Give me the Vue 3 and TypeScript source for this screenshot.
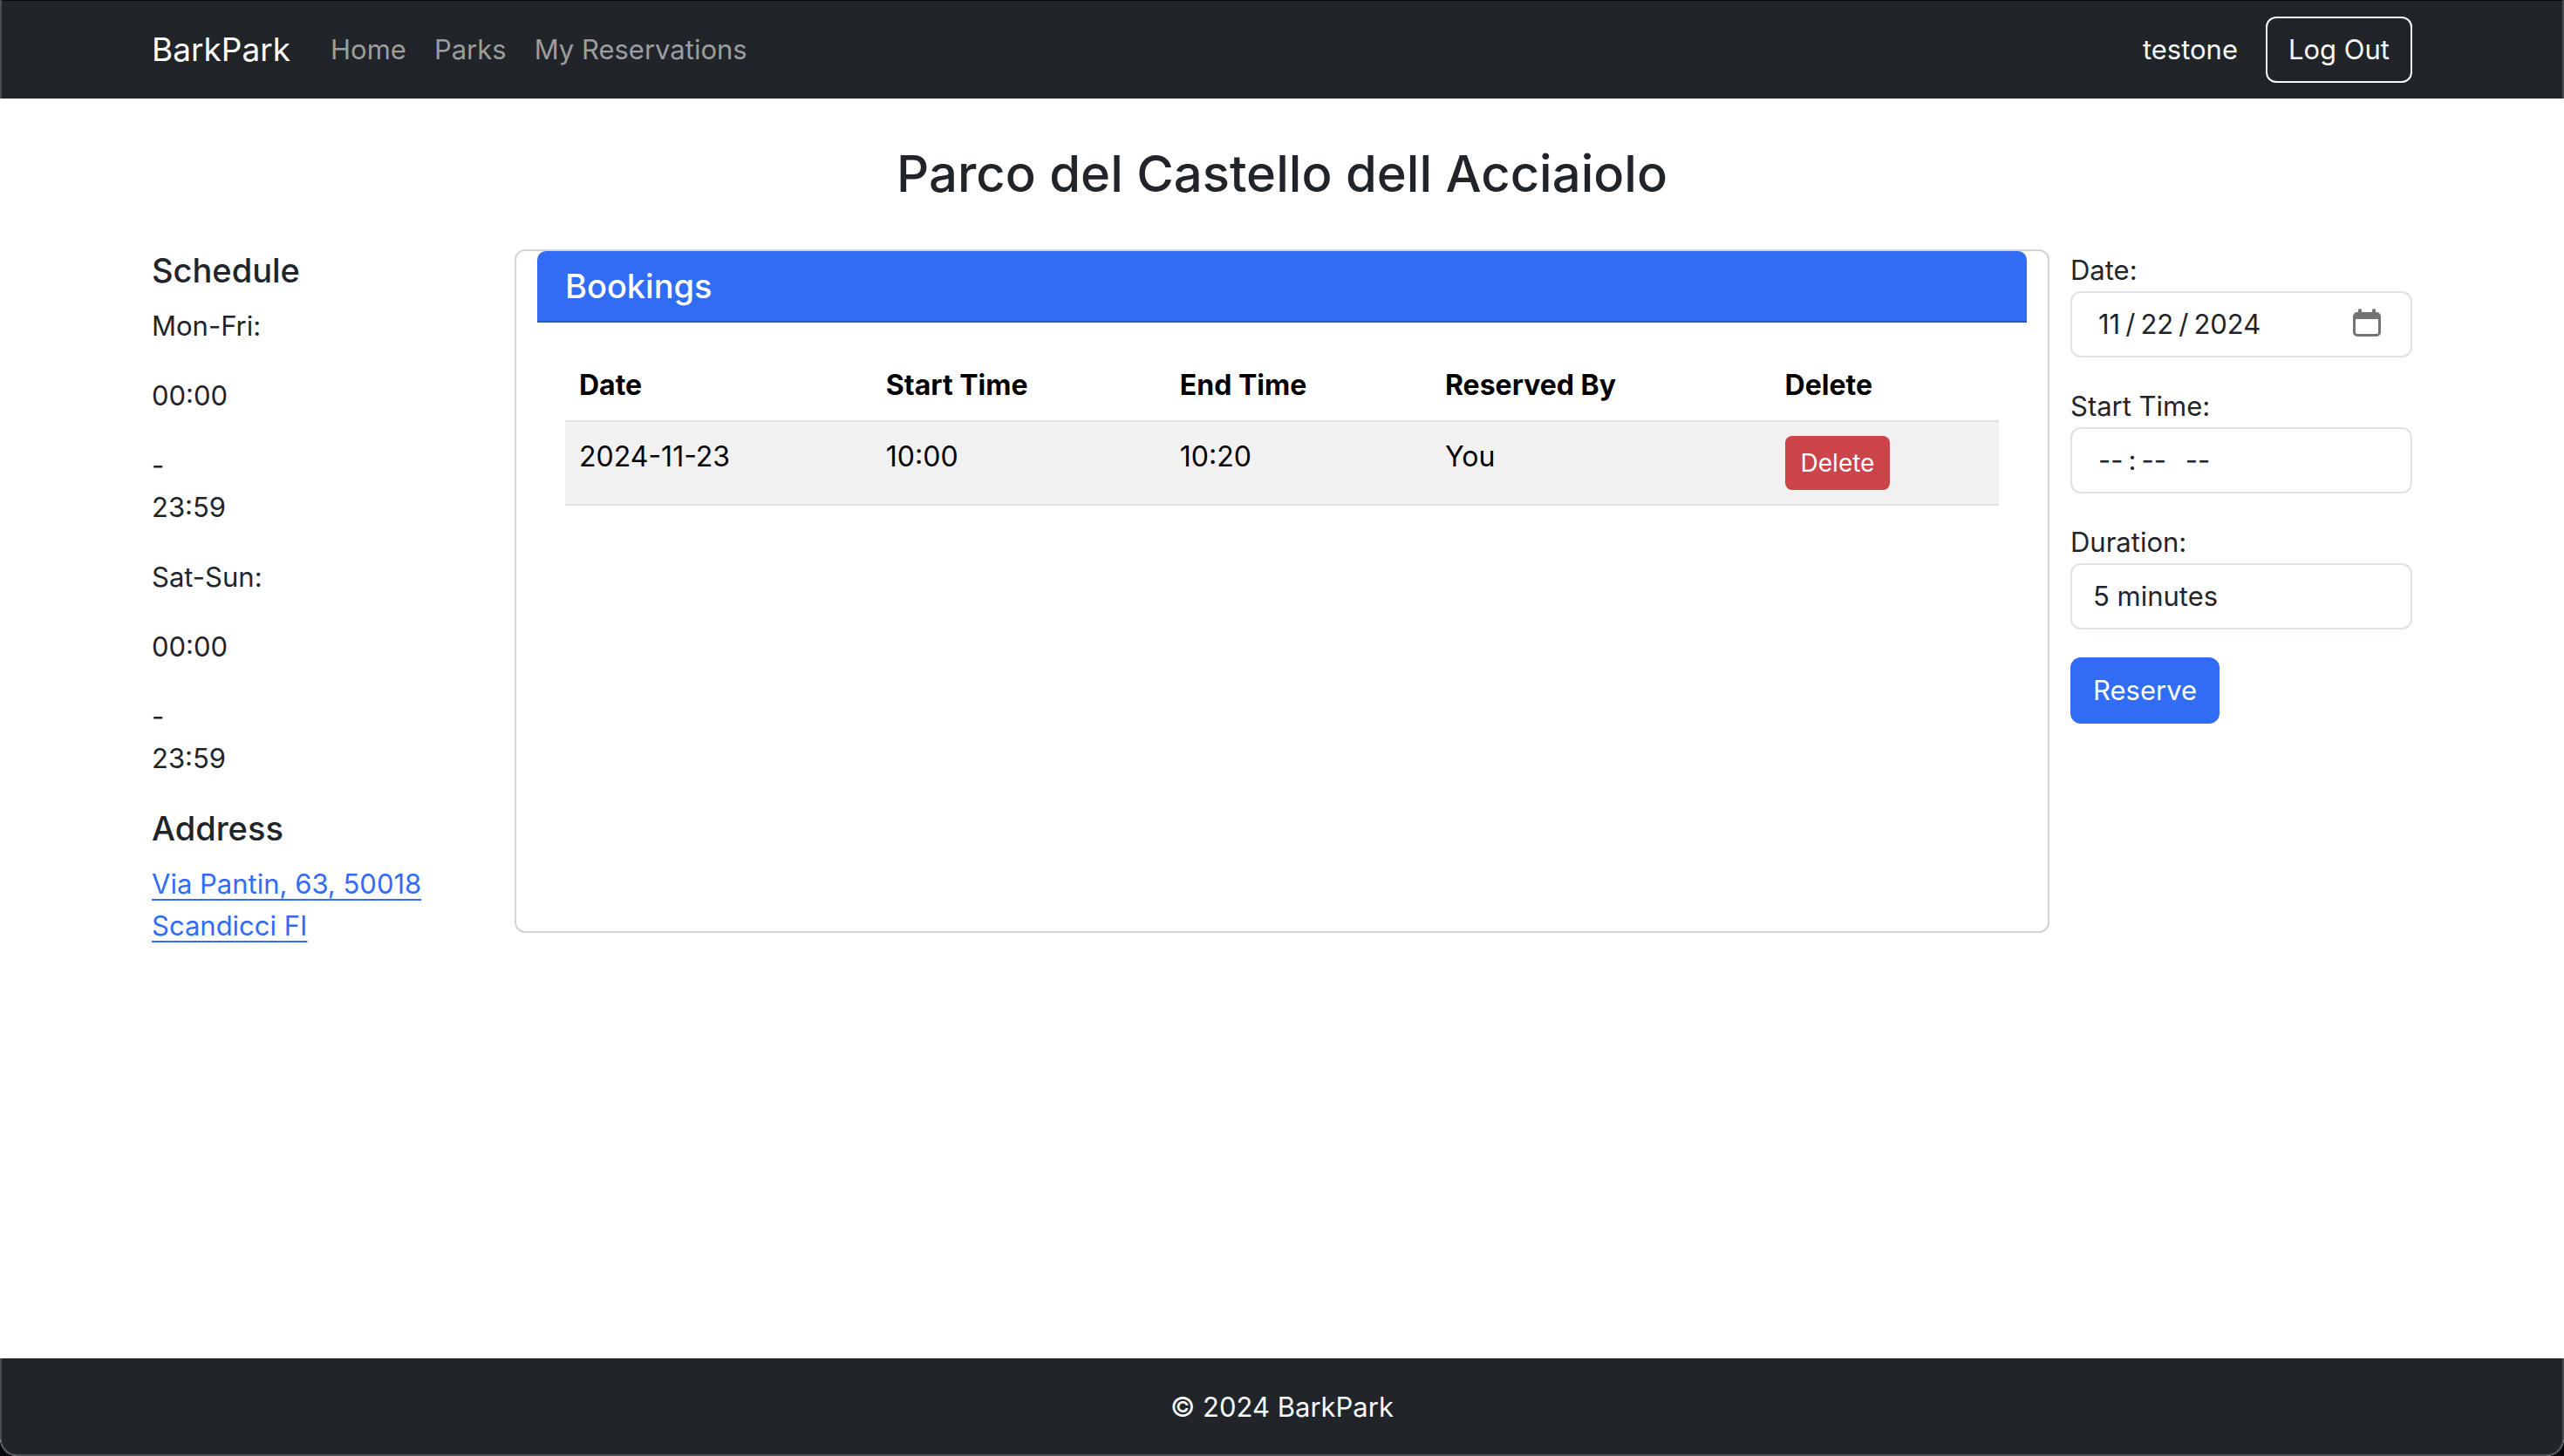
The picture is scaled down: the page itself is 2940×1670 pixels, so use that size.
<script setup lang="ts">
import { ref } from 'vue'

interface Booking {
  id: number
  date: string
  start: string
  end: string
  reservedBy: string
}

const navLinks = ['Home', 'Parks', 'My Reservations']
const schedule = [
  { days: 'Mon-Fri:', open: '00:00', close: '23:59' },
  { days: 'Sat-Sun:', open: '00:00', close: '23:59' },
]
const durations = [5, 10, 15, 20, 30, 60]

const bookings = ref<Booking[]>([
  { id: 1, date: '2024-11-23', start: '10:00', end: '10:20', reservedBy: 'You' },
])
const date = ref('2024-11-22')
const startTime = ref('')
const duration = ref(5)

function removeBooking(id: number) {
  bookings.value = bookings.value.filter((b) => b.id !== id)
}
</script>

<template>
  <div class="page">
    <header class="navbar">
      <div class="container nav-inner">
        <a class="brand" href="#">BarkPark</a>
        <nav class="nav-links">
          <a v-for="link in navLinks" :key="link" class="nav-link" href="#">{{ link }}</a>
        </nav>
        <span class="user">testone</span>
        <button class="btn btn-outline" type="button">Log Out</button>
      </div>
    </header>

    <main class="container main">
      <h1 class="title">Parco del Castello dell Acciaiolo</h1>
      <div class="row">
        <aside class="side">
          <h2 class="heading">Schedule</h2>
          <template v-for="slot in schedule" :key="slot.days">
            <p>{{ slot.days }}</p>
            <p>{{ slot.open }}</p>
            <p>-<br />{{ slot.close }}</p>
          </template>
          <h2 class="heading">Address</h2>
          <a class="address" href="#">Via Pantin, 63, 50018 Scandicci FI</a>
        </aside>

        <section class="card">
          <h2 class="card-header">Bookings</h2>
          <div class="card-body">
            <table>
              <colgroup>
                <col class="c-date" />
                <col class="c-start" />
                <col class="c-end" />
                <col class="c-by" />
                <col />
              </colgroup>
              <thead>
                <tr>
                  <th scope="col">Date</th>
                  <th scope="col">Start Time</th>
                  <th scope="col">End Time</th>
                  <th scope="col">Reserved By</th>
                  <th scope="col">Delete</th>
                </tr>
              </thead>
              <tbody>
                <tr v-for="b in bookings" :key="b.id">
                  <td>{{ b.date }}</td>
                  <td>{{ b.start }}</td>
                  <td>{{ b.end }}</td>
                  <td>{{ b.reservedBy }}</td>
                  <td>
                    <button class="btn-delete" type="button" @click="removeBooking(b.id)">Delete</button>
                  </td>
                </tr>
              </tbody>
            </table>
          </div>
        </section>

        <form class="side" @submit.prevent>
          <div class="field">
            <label for="date">Date:</label>
            <div class="date-wrap">
              <input id="date" v-model="date" class="control" type="date" />
              <svg class="calendar" viewBox="0 0 32 32" aria-hidden="true">
                <path
                  fill="#737376"
                  fill-rule="evenodd"
                  d="M6 2a2 2 0 0 1 4 0V4h12V2a2 2 0 0 1 4 0V4h1a5 5 0 0 1 5 5v18a5 5 0 0 1-5 5H5a5 5 0 0 1-5-5V9a5 5 0 0 1 5-5h1zM3 12v15a2 2 0 0 0 2 2h22a2 2 0 0 0 2-2V12z"
                />
              </svg>
            </div>
          </div>
          <div class="field">
            <label for="start">Start Time:</label>
            <input id="start" v-model="startTime" class="control" type="time" />
          </div>
          <div class="field">
            <label for="duration">Duration:</label>
            <select id="duration" v-model="duration" class="control">
              <option v-for="d in durations" :key="d" :value="d">{{ d }} minutes</option>
            </select>
          </div>
          <button class="btn btn-primary" type="submit">Reserve</button>
        </form>
      </div>
    </main>

    <footer class="footer">© 2024 BarkPark</footer>
  </div>
</template>

<style>
body {
  background: #05070d;
}
</style>

<style scoped>
.page,
.page * {
  box-sizing: border-box;
}
.page {
  display: flex;
  flex-direction: column;
  min-height: 100vh;
  overflow: hidden;
  border-radius: 0 0 20px 20px;
  background: #fff;
  color: #212529;
  font-family: Inter, 'Liberation Sans', sans-serif;
  font-size: 31px;
  line-height: 48px;
}
h1,
h2,
p {
  margin: 0;
}
.container {
  width: 100%;
  max-width: 2640px;
  margin: 0 auto;
  padding: 0 24px;
}
.navbar {
  padding-top: 1px;
  border: 2px solid #4b4e51;
  border-width: 0 2px;
  background: #212529;
  box-shadow: inset 0 1px #0b0c0e;
}
.nav-inner {
  display: flex;
  align-items: center;
  height: 112px;
}
.brand {
  margin-right: 32px;
  color: #fff;
  font-size: 37px;
  text-decoration: none;
}
.nav-links {
  display: flex;
  flex: 1;
}
.nav-link {
  padding: 16px;
  color: #9b9d9e;
  text-decoration: none;
}
.nav-link:first-child {
  padding-left: 14px;
}
.user {
  margin-right: 32px;
  color: #f8f9fa;
}
.btn {
  height: 76px;
  padding: 0 24px;
  border: 2px solid;
  border-radius: 12px;
  font: inherit;
}
.btn-outline {
  border-color: #f8f9fa;
  background: transparent;
  color: #f8f9fa;
}
.btn-primary {
  border-color: #316cf4;
  background: #316cf4;
  color: #fff;
}
.main {
  flex: 1;
}
.title {
  margin: 48px 0;
  font-size: 58px;
  font-weight: 500;
  line-height: 77px;
  text-align: center;
}
.row {
  display: grid;
  grid-template-columns: 2fr 8fr 2fr;
  align-items: start;
  margin: 0 -24px;
}
.side {
  min-width: 0;
  padding: 0 24px;
}
.side p {
  margin-bottom: 32px;
}
.heading {
  margin-bottom: 16px;
  font-size: 38px;
  font-weight: 500;
}
.address {
  color: #316cf4;
  text-underline-offset: 6px;
  text-decoration-thickness: 2px;
}
.card {
  min-height: 784px;
  padding: 0 24px;
  border: 2px solid #d2d3d3;
  border-radius: 12px;
}
.card-header {
  padding: 16px 32px;
  border-bottom: 2px solid #2b59c4;
  border-radius: 10px 10px 0 0;
  background: #316cf4;
  color: #fff;
  font-size: 38px;
  font-weight: 500;
}
.card-body {
  padding: 32px;
}
table {
  width: 100%;
  table-layout: fixed;
  border-collapse: separate;
  border-spacing: 0;
  color: #000;
  font-size: 32px;
}
.c-date {
  width: 21.4%;
}
.c-start {
  width: 20.5%;
}
.c-end {
  width: 18.5%;
}
.c-by {
  width: 23.7%;
}
th,
td {
  padding: 16px;
  border-bottom: 2px solid #dee2e6;
  text-align: left;
  vertical-align: top;
}
th {
  font-weight: 700;
}
td {
  background: #f1f1f1;
}
.btn-delete {
  display: block;
  height: 62px;
  padding: 0 18px;
  border: 0;
  border-radius: 8px;
  background: #cb444a;
  color: #fff;
  font: inherit;
  font-size: 28px;
}
.field {
  display: flex;
  flex-direction: column;
  margin-bottom: 32px;
}
.date-wrap {
  position: relative;
}
.control {
  display: block;
  width: 100%;
  height: 76px;
  padding: 12px 24px;
  border: 2px solid #dee2e6;
  border-radius: 12px;
  background: #fff;
  color: #212529;
  font: inherit;
  appearance: none;
}
.control::-webkit-datetime-edit {
  padding: 0 4px;
}
.control::-webkit-datetime-edit-fields-wrapper {
  padding: 0;
}
.control::-webkit-datetime-edit-text {
  padding: 0 4px;
}
.control::-webkit-datetime-edit-month-field,
.control::-webkit-datetime-edit-day-field,
.control::-webkit-datetime-edit-year-field,
.control::-webkit-datetime-edit-hour-field,
.control::-webkit-datetime-edit-minute-field {
  padding: 0 2px;
}
.control::-webkit-datetime-edit-ampm-field {
  padding: 0 2px 0 6px;
}
.control::-webkit-calendar-picker-indicator {
  width: 32px;
  height: 32px;
  opacity: 0;
}
.calendar {
  position: absolute;
  top: 20px;
  right: 36px;
  width: 32px;
  height: 32px;
  pointer-events: none;
}
.footer {
  padding: 32px 32px 30px;
  border: 2px solid #4b4e51;
  border-top: 0;
  border-radius: 0 0 20px 20px;
  background: #212529;
  color: #f8f9fa;
  text-align: center;
}
</style>
